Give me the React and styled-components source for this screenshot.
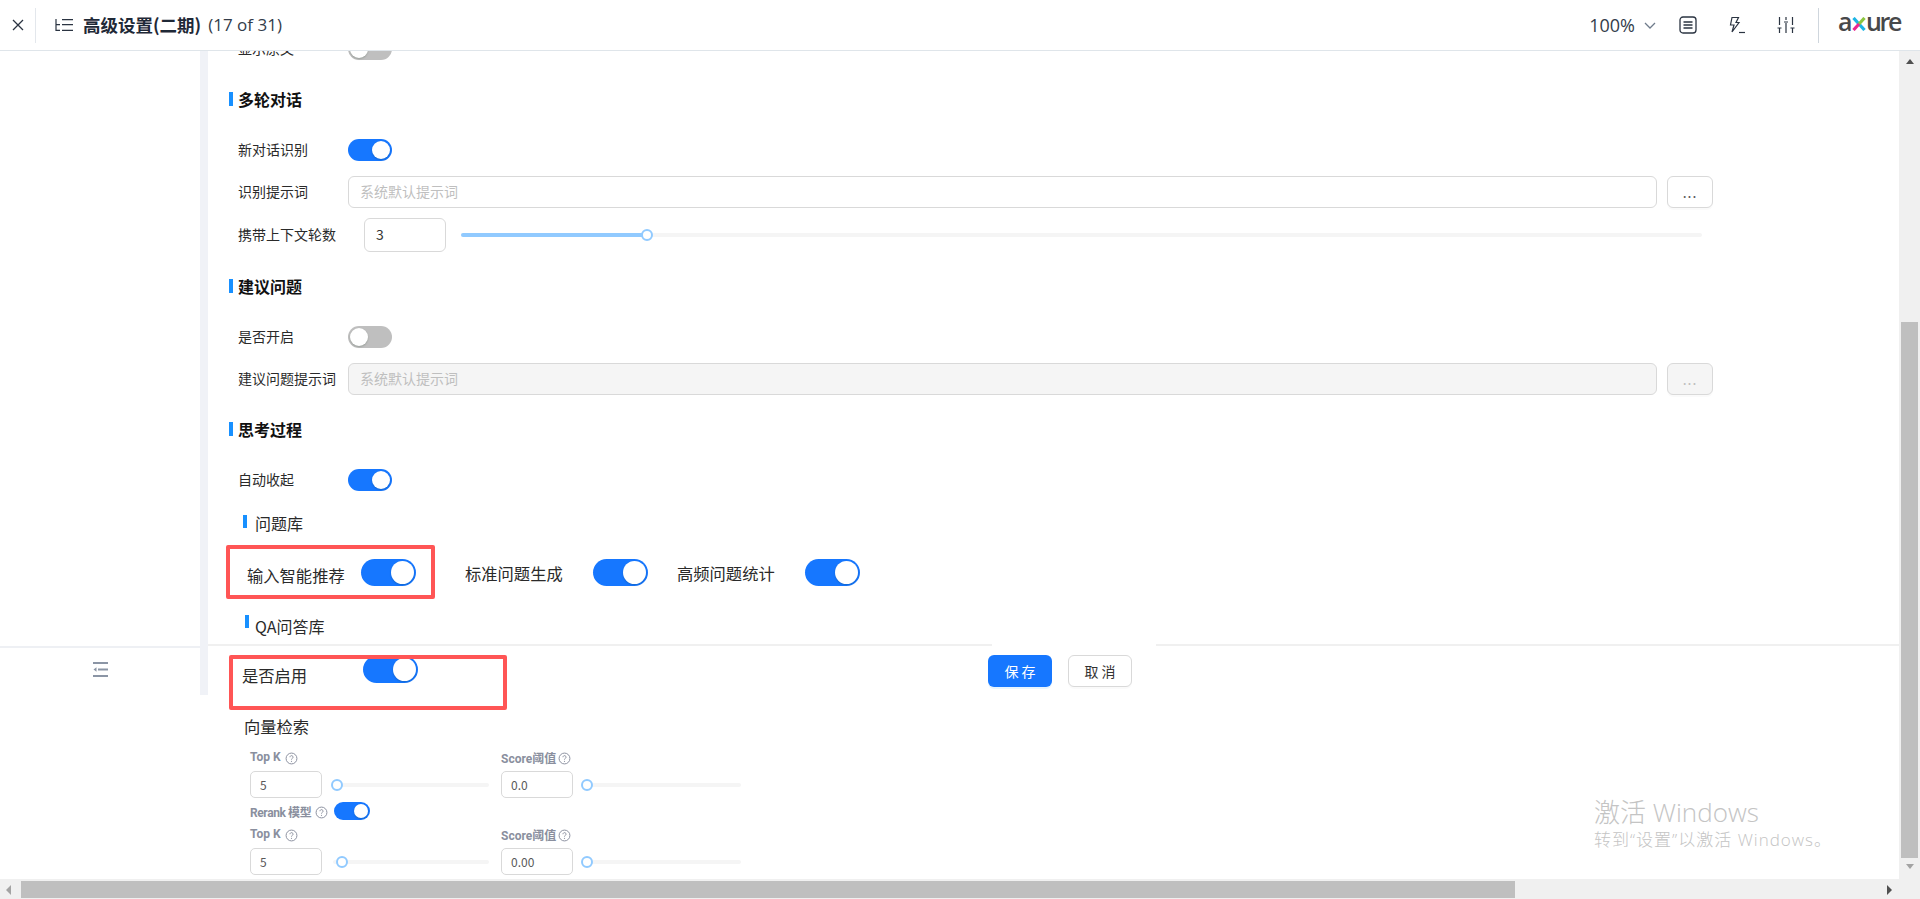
import React from 'react';
import styled, { createGlobalStyle } from 'styled-components';

const GlobalStyle = createGlobalStyle`
  html, body {
    margin: 0;
    height: 100%;
    overflow: hidden;
    background: #fff;
  }
  * {
    box-sizing: border-box;
  }
  body {
    font-family: "Noto Sans CJK SC", "Open Sans", sans-serif;
    color: #262626;
  }
`;

const Help = () => (
  <HelpIcon viewBox="0 0 12 12">
    <circle cx="6" cy="6" r="5" fill="none" stroke="#8a8f9e" strokeWidth="0.9" />
    <path d="M4.6 4.8a1.4 1.4 0 1 1 2.2 1.1c-.5.3-.8.6-.8 1.1" fill="none" stroke="#8a8f9e" strokeWidth="0.9" />
    <circle cx="6" cy="8.6" r="0.55" fill="#8a8f9e" />
  </HelpIcon>
);

const Heading = ({ children }) => (
  <SectionHeading>
    <HeadingBar />
    {children}
  </SectionHeading>
);

const MiniField = ({ label, value, handle, track, helpGap }) => (
  <MiniCell>
    <MiniLabel $gap={helpGap}>
      {label}
      <Help />
    </MiniLabel>
    <MiniControls>
      <MiniInput>{value}</MiniInput>
      <MiniSlider $width={track}>
        <MiniHandle style={{ left: handle }} />
      </MiniSlider>
    </MiniControls>
  </MiniCell>
);

export default function App() {
  return (
    <Page>
      <GlobalStyle />
      <Header>
        <CloseButton>
          <svg width="14" height="14" viewBox="0 0 14 14" fill="none" stroke="#2b3442" strokeWidth="1.3">
            <path d="M2 2l10 10M12 2L2 12" />
          </svg>
        </CloseButton>
        <PagesIcon viewBox="0 0 18 12" fill="none" stroke="#2b3442" strokeWidth="1.2">
          <path d="M1 0v11.400h4M1 5.700h4M7 .6h11M7 5.700h11M7 11.400h11" />
        </PagesIcon>
        <Title>高级设置(二期)</Title>
        <Count>(17 of 31)</Count>
        <HeaderRight>
          <Zoom>100%</Zoom>
          <svg width="12" height="7" viewBox="0 0 12 7" fill="none" stroke="#6f7b8b" strokeWidth="1.3">
            <path d="M1 1l5 5 5-5" />
          </svg>
          <DocIcon viewBox="0 0 18 18" fill="none" stroke="#2b3442" strokeWidth="1.3">
            <rect x="1" y="1" width="16" height="16" rx="3" />
            <path d="M4.500 6h9M4.500 9h9M4.500 12h9" />
          </DocIcon>
          <BoltIcon viewBox="0 0 18 18" fill="none" stroke="#2b3442" strokeWidth="1.2">
            <path d="M4 1.500h6.500L8 6.500h3L4 16l2-7H2.500z" />
            <path d="M11 16.500h6" />
          </BoltIcon>
          <SlidersIcon viewBox="0 0 18 18" fill="none" stroke="#2b3442" strokeWidth="1.2">
            <path d="M2.500 1v8M2.500 12v5M0.500 12h4M9 1v3M9 7v10M7 6h4M15.500 1v8M15.500 12v5M13.500 12h4" />
          </SlidersIcon>
          <HeaderDivider />
          <Logo>
            a
            <LogoX viewBox="0 0 14 14" fill="none" strokeWidth="3.2">
              <path d="M1.500 1l11 12" stroke="#1cb4e4" />
              <path d="M12.500 1L7 7" stroke="#8cc63f" />
              <path d="M7 7l-5.500 6" stroke="#ec268f" />
            </LogoX>
            ure
          </Logo>
        </HeaderRight>
      </Header>

      <Body>
        <Rail>
          <RailFooter>
            <svg width="15" height="15" viewBox="0 0 15 15" fill="#8b95a5">
              <rect x="0" y="0" width="15" height="2" />
              <rect x="5" y="6.500" width="10" height="2" />
              <path d="M0.500 7.500l3-2.300v4.600z" />
              <rect x="0" y="13" width="15" height="2" />
            </svg>
          </RailFooter>
        </Rail>

        <Content>
          <Scrolled>
            <Row $height={22} $mb={29}>
              <Label>显示原文</Label>
              <Switch />
            </Row>

            <Heading>多轮对话</Heading>
            <Row $height={22} $mb={15}>
              <Label>新对话识别</Label>
              <Switch $on />
            </Row>
            <Row $height={32} $mb={10}>
              <Label>识别提示词</Label>
              <TextInput>系统默认提示词</TextInput>
              <MoreButton>...</MoreButton>
            </Row>
            <Row $height={34} $mb={24}>
              <Label $width={126}>携带上下文轮数</Label>
              <NumberInput>3</NumberInput>
              <Slider>
                <SliderFill style={{ width: 186 }} />
                <SliderHandle style={{ left: 180 }} />
              </Slider>
            </Row>

            <Heading>建议问题</Heading>
            <Row $height={22} $mb={15}>
              <Label>是否开启</Label>
              <Switch />
            </Row>
            <Row $height={32} $mb={24}>
              <Label>建议问题提示词</Label>
              <TextInput $disabled>系统默认提示词</TextInput>
              <MoreButton $disabled>...</MoreButton>
            </Row>

            <Heading>思考过程</Heading>
            <Row $height={22} $mb={22}>
              <Label>自动收起</Label>
              <Switch $on />
            </Row>

            <SubHeading>
              <SubBar $left={5} $top={2} />
              问题库
            </SubHeading>

            <FeatureRow>
              <RedBox>
                <FeatureLabel $top={4}>输入智能推荐</FeatureLabel>
                <Switch $on $large />
              </RedBox>
              <Feature $left={30}>
                <FeatureLabel $top={2}>标准问题生成</FeatureLabel>
                <Switch $on $large />
              </Feature>
              <Feature $left={29}>
                <FeatureLabel $top={2}>高频问题统计</FeatureLabel>
                <Switch $on $large />
              </Feature>
            </FeatureRow>

            <SubHeading $top={17}>
              <SubBar $left={7} $top={-1} />
              QA问答库
            </SubHeading>
          </Scrolled>

          <FooterBand>
            <LineGap />
            <EnableBox>
              <EnableLabel>是否启用</EnableLabel>
              <ClippedToggle>
                <Switch $on $large />
              </ClippedToggle>
            </EnableBox>
            <Actions>
              <PrimaryButton>保 存</PrimaryButton>
              <GhostButton>取 消</GhostButton>
            </Actions>
          </FooterBand>

          <VectorTitle>向量检索</VectorTitle>
          <MiniRow $top={9}>
            <MiniField label="Top K" value="5" handle={-2} track={156} helpGap={4} />
            <MiniField label="Score阈值" value="0.0" handle={-3} track={157} helpGap={2} />
          </MiniRow>
          <RerankRow>
            <MiniLabel $gap={4} $condensed>
              Rerank 模型
              <Help />
            </MiniLabel>
            <MiniSwitchWrap>
              <Switch $on $mini />
            </MiniSwitchWrap>
          </RerankRow>
          <MiniRow $top={1}>
            <MiniField label="Top K" value="5" handle={3} track={156} helpGap={4} />
            <MiniField label="Score阈值" value="0.00" handle={-3} track={157} helpGap={2} />
          </MiniRow>
        </Content>

        <VerticalBar>
          <Arrow $dir="up" />
          <BarThumb />
          <Arrow $dir="down" />
        </VerticalBar>
      </Body>

      <HorizontalBar>
        <Arrow $dir="left" />
        <HorizontalThumb />
        <Arrow $dir="right" />
      </HorizontalBar>

      <Watermark>
        <WatermarkTitle>激活 Windows</WatermarkTitle>
        <WatermarkText>转到“设置”以激活 Windows。</WatermarkText>
      </Watermark>
    </Page>
  );
}

const Page = styled.div`
  position: relative;
  width: 1920px;
  height: 899px;
  display: flex;
  flex-direction: column;
  overflow: hidden;
  background: #fff;
`;

const Header = styled.header`
  flex: none;
  height: 51px;
  display: flex;
  align-items: center;
  border-bottom: 1px solid #dfe5ea;
  padding-right: 20px;
`;

const CloseButton = styled.div`
  width: 36px;
  height: 35px;
  display: flex;
  align-items: center;
  justify-content: center;
  border-right: 1px solid #e3e7ec;
  margin-right: 19px;
`;

const PagesIcon = styled.svg`
  width: 18px;
  height: 12px;
  margin-right: 10px;
`;

const Title = styled.span`
  font-size: 17.5px;
  font-weight: 700;
  line-height: 22px;
  color: #1f2937;
`;

const Count = styled.span`
  font-family: "Open Sans", sans-serif;
  font-size: 17px;
  line-height: 22px;
  color: #333c4a;
  margin-left: 7px;
`;

const HeaderRight = styled.div`
  margin-left: auto;
  display: flex;
  align-items: center;
`;

const Zoom = styled.span`
  font-family: "Open Sans", sans-serif;
  font-size: 18px;
  color: #333c4a;
  margin-right: 9px;
`;

const DocIcon = styled.svg`
  width: 18px;
  height: 18px;
  margin-left: 23px;
`;

const BoltIcon = styled.svg`
  width: 18px;
  height: 18px;
  margin-left: 31px;
`;

const SlidersIcon = styled.svg`
  width: 18px;
  height: 18px;
  margin-left: 31px;
`;

const HeaderDivider = styled.div`
  width: 1px;
  height: 35px;
  background: #cfd6dd;
  margin-left: 23px;
  margin-right: 19px;
`;

const Logo = styled.div`
  display: flex;
  align-items: center;
  font-family: "Open Sans", sans-serif;
  font-size: 25px;
  font-weight: 600;
  line-height: 26px;
  letter-spacing: -2.4px;
  color: #47484a;
  margin-top: -8px;
`;

const LogoX = styled.svg`
  width: 14px;
  height: 14px;
  margin: 5px 0 0 2px;
`;

const Body = styled.div`
  flex: 1;
  min-height: 0;
  display: flex;
`;

const Rail = styled.aside`
  flex: none;
  width: 208px;
  height: 644px;
  display: flex;
  flex-direction: column;
  justify-content: flex-end;
  border-right: 8px solid #f0f2f7;
`;

const RailFooter = styled.div`
  height: 49px;
  display: flex;
  justify-content: center;
  align-items: flex-start;
  padding-top: 14px;
  border-top: 2px solid #eef0f4;
`;

const Content = styled.main`
  flex: 1;
  min-width: 0;
  display: flex;
  flex-direction: column;
  overflow: hidden;
`;

const Scrolled = styled.div`
  height: 593px;
  flex: none;
  padding: 0 186px 0 30px;
  overflow: hidden;
`;

const Row = styled.div`
  display: flex;
  align-items: center;
  height: ${({ $height }) => $height}px;
  margin-bottom: ${({ $mb }) => $mb}px;

  &:first-child {
    margin-top: -13px;
  }
`;

const Label = styled.span`
  flex: none;
  width: ${({ $width }) => $width || 110}px;
  padding-bottom: 2px;
  font-size: 14px;
  line-height: 20px;
  color: #2a2a2a;
`;

const Switch = styled.span`
  position: relative;
  flex: none;
  display: block;
  width: ${({ $large, $mini }) => ($large ? 55 : $mini ? 36 : 44)}px;
  height: ${({ $large, $mini }) => ($large ? 27 : $mini ? 18 : 22)}px;
  border-radius: 14px;
  background: ${({ $on }) => ($on ? '#1677ff' : '#bfbfbf')};

  &::after {
    content: '';
    position: absolute;
    top: 2px;
    ${({ $on }) => ($on ? 'right: 2px;' : 'left: 2px;')}
    width: ${({ $large, $mini }) => ($large ? 23 : $mini ? 14 : 18)}px;
    height: ${({ $large, $mini }) => ($large ? 23 : $mini ? 14 : 18)}px;
    border-radius: 50%;
    background: #fff;
    box-shadow: 0 1px 2px rgba(0, 35, 11, 0.2);
  }
`;

const SectionHeading = styled.h3`
  position: relative;
  margin: 0 0 28px;
  height: 22px;
  font-size: 16px;
  font-weight: 700;
  line-height: 20px;
  color: #111;
`;

const HeadingBar = styled.i`
  position: absolute;
  left: -9px;
  top: 3px;
  width: 4px;
  height: 14px;
  background: #1890ff;
`;

const TextInput = styled.div`
  flex: 1;
  height: 32px;
  padding: 0 11px 2px;
  display: flex;
  align-items: center;
  font-size: 14px;
  color: #bfbfbf;
  border: 1px solid #d9d9d9;
  border-radius: 6px;
  background: ${({ $disabled }) => ($disabled ? '#f5f5f5' : '#fff')};
`;

const MoreButton = styled.div`
  flex: none;
  width: 46px;
  height: 32px;
  margin-left: 10px;
  display: flex;
  align-items: center;
  justify-content: center;
  font-size: 14px;
  letter-spacing: 1px;
  color: ${({ $disabled }) => ($disabled ? '#bfbfbf' : '#595959')};
  border: 1px solid #d9d9d9;
  border-radius: 6px;
  background: ${({ $disabled }) => ($disabled ? '#f5f5f5' : '#fff')};
  box-shadow: 0 2px 0 rgba(0, 0, 0, 0.02);
`;

const NumberInput = styled.div`
  flex: none;
  width: 82px;
  height: 34px;
  padding: 0 0 2px 11px;
  display: flex;
  align-items: center;
  font-size: 14px;
  color: #333;
  border: 1px solid #d9d9d9;
  border-radius: 6px;
`;

const Slider = styled.div`
  position: relative;
  flex: none;
  width: 1241px;
  height: 4px;
  margin-left: 15px;
  margin-right: -10px;
  border-radius: 2px;
  background: #f5f5f5;
`;

const SliderFill = styled.div`
  height: 4px;
  border-radius: 2px;
  background: #91caff;
`;

const SliderHandle = styled.div`
  position: absolute;
  top: -4px;
  width: 12px;
  height: 12px;
  border-radius: 50%;
  border: 2px solid #91caff;
  background: #fff;
`;

const SubHeading = styled.div`
  position: relative;
  height: 22px;
  margin-top: ${({ $top }) => $top || 0}px;
  padding-left: 17px;
  font-size: 16px;
  line-height: 20px;
  color: #2a2a2a;
`;

const SubBar = styled.i`
  position: absolute;
  left: ${({ $left }) => $left}px;
  top: ${({ $top }) => $top}px;
  width: 4px;
  height: 13px;
  background: #1890ff;
`;

const FeatureRow = styled.div`
  display: flex;
  align-items: flex-start;
  margin: 10px 0 0 -12px;
`;

const RedBox = styled.div`
  flex: none;
  width: 209px;
  height: 54px;
  display: flex;
  align-items: flex-start;
  gap: 16px;
  padding: 10px 0 0 17px;
  border: 4px solid #ff5555;
  border-radius: 2px;
`;

const Feature = styled.div`
  display: flex;
  align-items: flex-start;
  gap: 30px;
  margin-left: ${({ $left }) => $left}px;
  padding-top: 14px;
`;

const FeatureLabel = styled.span`
  flex: none;
  width: 98px;
  margin-top: ${({ $top }) => $top}px;
  font-size: 16.3px;
  line-height: 24px;
  white-space: nowrap;
  color: #2a2a2a;
`;

const FooterBand = styled.div`
  position: relative;
  flex: none;
  height: 65px;
  display: flex;
  border-top: 2px solid #f0f0f0;
  padding-top: 9px;
  padding-left: 21px;
`;

const LineGap = styled.div`
  position: absolute;
  top: -2px;
  left: 784px;
  width: 164px;
  height: 2px;
  background: #fff;
`;

const EnableBox = styled.div`
  flex: none;
  width: 278px;
  height: 55px;
  display: flex;
  align-items: flex-start;
  padding: 4px 0 0 9px;
  border: 4px solid #ff5555;
  border-radius: 2px;
`;

const EnableLabel = styled.span`
  flex: none;
  width: 121px;
  font-size: 16.3px;
  line-height: 24px;
  color: #2a2a2a;
`;

const ClippedToggle = styled.div`
  display: flex;
  align-items: flex-end;
  height: 24px;
  margin-top: -4px;
  overflow: hidden;
`;

const Actions = styled.div`
  display: flex;
  gap: 16px;
  margin-left: 481px;
`;

const PrimaryButton = styled.div`
  width: 64px;
  height: 32px;
  padding-bottom: 1px;
  display: flex;
  align-items: center;
  justify-content: center;
  font-size: 14px;
  color: #fff;
  background: #1677ff;
  border-radius: 6px;
  box-shadow: 0 2px 0 rgba(5, 145, 255, 0.1);
`;

const GhostButton = styled(PrimaryButton)`
  color: #333;
  background: #fff;
  border: 1px solid #d9d9d9;
  box-shadow: 0 2px 0 rgba(0, 0, 0, 0.02);
`;

const VectorTitle = styled.div`
  margin: 6px 0 0 36px;
  height: 24px;
  font-size: 16.3px;
  line-height: 22px;
  color: #2a2a2a;
`;

const MiniRow = styled.div`
  display: flex;
  margin: ${({ $top }) => $top}px 0 0 42px;
`;

const MiniCell = styled.div`
  flex: none;
  width: 251px;
`;

const MiniLabel = styled.div`
  display: flex;
  align-items: center;
  height: 18px;
  gap: ${({ $gap }) => $gap}px;
  font-family: Roboto, "Noto Sans CJK SC", sans-serif;
  font-size: 12px;
  font-weight: 700;
  letter-spacing: ${({ $condensed }) => ($condensed ? '-0.4px' : 'normal')};
  color: #8a8f9e;
`;

const HelpIcon = styled.svg`
  width: 13px;
  height: 13px;
  margin-top: 2px;
`;

const MiniControls = styled.div`
  display: flex;
  align-items: center;
  margin-top: 5px;
`;

const MiniInput = styled.div`
  flex: none;
  width: 72px;
  height: 27px;
  padding-left: 9px;
  display: flex;
  align-items: center;
  font-size: 12px;
  color: #595959;
  border: 1px solid #d9d9d9;
  border-radius: 5px;
`;

const MiniSlider = styled.div`
  position: relative;
  flex: none;
  width: ${({ $width }) => $width}px;
  height: 4px;
  margin-left: 11px;
  border-radius: 2px;
  background: #f5f5f5;
`;

const MiniHandle = styled.div`
  position: absolute;
  top: -4px;
  width: 12px;
  height: 12px;
  border-radius: 50%;
  border: 2px solid #91caff;
  background: #fff;
`;

const RerankRow = styled.div`
  display: flex;
  align-items: center;
  margin: 4px 0 4px 42px;
  height: 18px;
`;

const MiniSwitchWrap = styled.div`
  margin-left: 6px;
  display: flex;
`;

const VerticalBar = styled.div`
  flex: none;
  width: 21px;
  display: flex;
  flex-direction: column;
  align-items: center;
  background: #f0f0f0;
  padding-top: 8px;
`;

const BarThumb = styled.div`
  width: 17px;
  height: 536px;
  margin-top: 258px;
  background: #bfbfbf;
`;

const Arrow = styled.div`
  flex: none;
  width: 0;
  height: 0;
  border-style: solid;
  border-color: transparent;
  ${({ $dir }) =>
    ({
      up: 'border-width: 0 4.5px 5px; border-bottom-color: #505050;',
      down: 'border-width: 5px 4.5px 0; border-top-color: #a3a3a3; margin-top: 6px;',
      left: 'border-width: 5px 5px 5px 0; border-right-color: #a3a3a3; margin: 0 10px 0 6px;',
      right: 'border-width: 5px 0 5px 5px; border-left-color: #505050; margin-left: auto; margin-right: 7px;',
    })[$dir]}
`;

const HorizontalBar = styled.div`
  flex: none;
  height: 20px;
  display: flex;
  align-items: center;
  padding: 2px 21px 1px 0;
  background: #f0f0f0;
`;

const HorizontalThumb = styled.div`
  width: 1494px;
  height: 17px;
  background: #bfbfbf;
`;

const Watermark = styled.div`
  position: absolute;
  left: 1594px;
  top: 795px;
  font-family: "Open Sans", "Noto Sans CJK SC", sans-serif;
  color: #c4c4c4;
`;

const WatermarkTitle = styled.div`
  font-size: 26px;
  line-height: 34px;
  font-weight: 300;
`;

const WatermarkText = styled.div`
  font-size: 17px;
  line-height: 22px;
  letter-spacing: 1px;
  font-weight: 300;
`;
